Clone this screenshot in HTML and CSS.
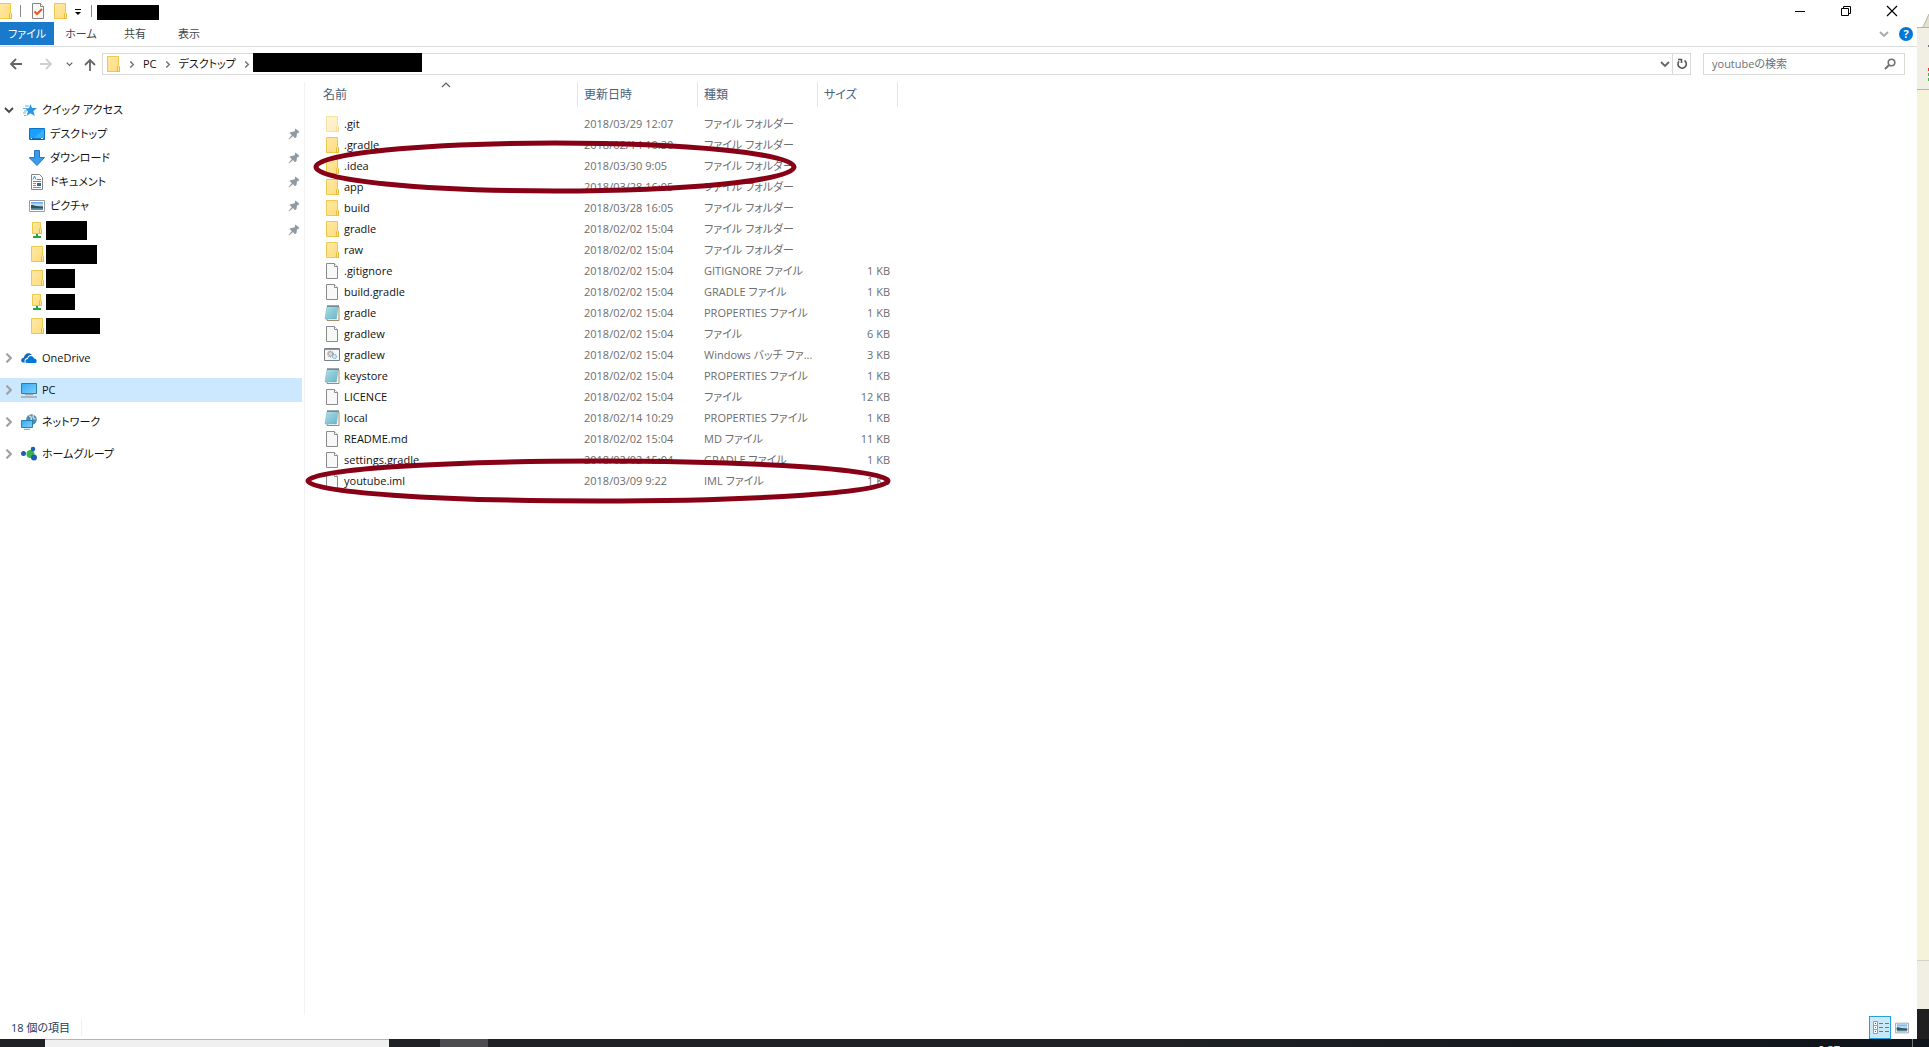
FILE: index.html
```html
<!DOCTYPE html>
<html lang="ja">
<head>
<meta charset="utf-8">
<title>エクスプローラー</title>
<link rel="stylesheet" href="styles.css">
</head>
<body>
<svg class="defs" aria-hidden="true">
  <linearGradient id="gold" x1="0" y1="0" x2="1" y2="1"><stop offset="0" stop-color="#ffe9a6"/><stop offset="1" stop-color="#ffdc7c"/></linearGradient>
  <linearGradient id="screen" x1="0" y1="0" x2="1" y2="1"><stop offset="0" stop-color="#36a9f4"/><stop offset="1" stop-color="#7fd2fb"/></linearGradient>
  <linearGradient id="pad" x1="0" y1="0" x2="1" y2="1"><stop offset="0" stop-color="#b5e3ea"/><stop offset="1" stop-color="#5fb0c6"/></linearGradient>
  <linearGradient id="photo" x1="0" y1="0" x2="0" y2="1"><stop offset="0" stop-color="#5a9ce8"/><stop offset=".4" stop-color="#d6ebfa"/><stop offset=".6" stop-color="#3d6b74"/><stop offset="1" stop-color="#5d93b5"/></linearGradient>
  <symbol id="folder" viewBox="0 0 16 16"><path d="M2.500 .500h11v9.500l1 1v4.500h-12z" fill="url(#gold)" stroke="#efc94c"/><path d="M12.500 15v-4.500l1-1 1 1v5h-2z" fill="#ffe69a" stroke="#e9bd3c"/></symbol>
  <symbol id="netfolder" viewBox="0 0 16 16"><path d="M3.500 .500h8v6l1 1v4h-9z" fill="url(#gold)" stroke="#efc94c"/><path d="M10.500 11v-4l1-1 1 1v4.500h-2z" fill="#ffe69a" stroke="#e9bd3c"/><path d="M7 12h2v2h3v2H4v-2h3z" fill="#27a737"/></symbol>
  <symbol id="file" viewBox="0 0 16 16"><path d="M2.500 .500h8l3 3v12h-11z" fill="#f7f9f9" stroke="#8b8b8b"/><path d="M10.500 .500v3h3" fill="#fff" stroke="#8b8b8b"/></symbol>
  <symbol id="notes" viewBox="0 0 16 16"><path d="M4 3l11-1v13.500H3z" fill="#fff" stroke="#a38d68"/><path d="M3 1.500h11L12.500 14H1z" fill="url(#pad)" stroke="#79b6c4" stroke-width=".6"/><path d="M3.500 5h10M3 8h10M2.500 11h10" stroke="#8bcbd8" stroke-width=".6"/><path d="M3.500 1h11" stroke="#39545c" stroke-width="2" stroke-dasharray="1 1"/></symbol>
  <symbol id="batch" viewBox="0 0 16 16"><path d="M.500 1.500h15v12H.500z" fill="#f5f7f8" stroke="#7b8085"/><path d="M1 2.500h14" stroke="#8d9297"/><circle cx="6.500" cy="7" r="2.500" fill="#ddd" stroke="#8b8b8b" stroke-width="1.500" stroke-dasharray="1 .6"/><circle cx="10.500" cy="9.500" r="2" fill="#d8ecfa" stroke="#84b5d8" stroke-width="1.300" stroke-dasharray="1 .5"/></symbol>
  <symbol id="chev" viewBox="0 0 8 8"><path d="M2 .500L5.500 4 2 7.500" fill="none" stroke="currentColor" stroke-width="1.700"/></symbol>
  <symbol id="chevd" viewBox="0 0 10 8"><path d="M1 2l4 4 4-4" fill="none" stroke="currentColor" stroke-width="1.800"/></symbol>
  <symbol id="pin" viewBox="0 0 12 12"><path d="M7.500 .500l4 3.500-1.500 1-1 .5-.5 3.500-1.500 1.300-2-2.300L1 11.500l-.5-.5L3.800 7 1.500 5 3 4l3.500-.5z" fill="#8d99a3"/></symbol>
  <symbol id="arrow" viewBox="0 0 14 12"><path d="M13 6H2M7 1L2 6l5 5" fill="none" stroke="currentColor" stroke-width="1.800"/></symbol>
  <symbol id="picture" viewBox="0 0 16 16"><path d="M.500 2.500h15v11H.500z" fill="#fff" stroke="#9b9b9b"/><path d="M2 4h12v8H2z" fill="url(#photo)"/><path d="M2 7c4 0 6 2 12 2v1H2z" fill="#2d5552"/></symbol>
</svg>

<div class="screen">
  <main class="window">
    <header class="titlebar">
      <svg class="icon app"><use href="#folder"/></svg>
      <i class="sep"></i>
      <button class="quick" aria-label="プロパティ"><svg class="icon" viewBox="0 0 16 16"><path d="M2.500 .500h8l3 3v12h-11z" fill="#f8f8f8" stroke="#858585"/><path d="M10.500 .500v3h3" fill="#fff" stroke="#858585"/><path d="M4.500 8.500l2.500 2.500 5-5" fill="none" stroke="#e8571c" stroke-width="2"/></svg></button>
      <button class="quick" aria-label="新しいフォルダー"><svg class="icon"><use href="#folder"/></svg></button>
      <button class="quick more" aria-label="カスタマイズ"><svg width="8" height="8" viewBox="0 0 8 8"><path d="M1 .500h6" stroke="#000"/><path d="M1 3h6L4 6z" fill="#000"/></svg></button>
      <i class="sep"></i>
      <span class="redacted title"></span>
      <div class="controls">
        <button aria-label="最小化"><svg width="12" height="12"><path d="M1 6.500h10" stroke="#000"/></svg></button>
        <button aria-label="元に戻す"><svg width="12" height="12"><path d="M1.500 3.500h7v7h-7zM3.500 3.500v-2h7v7h-2" fill="none" stroke="#000"/></svg></button>
        <button aria-label="閉じる"><svg width="12" height="12"><path d="M1 1l10 10M11 1L1 11" stroke="#000" stroke-width="1.200"/></svg></button>
      </div>
    </header>

    <nav class="tabs">
      <button class="tab active">ファイル</button>
      <button class="tab">ホーム</button>
      <button class="tab">共有</button>
      <button class="tab">表示</button>
      <button class="expand" aria-label="リボンの展開"><svg width="10" height="8"><use href="#chevd"/></svg></button>
      <button class="help" aria-label="ヘルプ">?</button>
    </nav>

    <div class="toolbar">
      <div class="history">
        <button aria-label="戻る"><svg width="14" height="12"><use href="#arrow"/></svg></button>
        <button class="off" aria-label="進む"><svg class="flip" width="14" height="12"><use href="#arrow"/></svg></button>
        <button class="recent" aria-label="履歴"><svg width="7" height="6"><use href="#chevd"/></svg></button>
        <button aria-label="上へ"><svg width="12" height="13" viewBox="0 0 12 13"><path d="M6 13V2M1 7l5-5 5 5" fill="none" stroke="currentColor" stroke-width="1.800"/></svg></button>
      </div>
      <div class="address">
        <svg class="icon"><use href="#folder"/></svg>
        <svg class="crumb-sep" width="8" height="7"><use href="#chev"/></svg>
        <a href="#">PC</a>
        <svg class="crumb-sep" width="8" height="7"><use href="#chev"/></svg>
        <a href="#">デスクトップ</a>
        <svg class="crumb-sep" width="8" height="7"><use href="#chev"/></svg>
        <span class="redacted path"></span>
        <button class="drop" aria-label="場所の一覧"><svg width="10" height="8"><use href="#chevd"/></svg></button>
        <button class="refresh" aria-label="更新"><svg width="12" height="12" viewBox="0 0 12 12"><path d="M8.500 2.500A4.200 4.200 0 1 1 3 3.200M2 1.500H5.500V5" fill="none" stroke="currentColor" stroke-width="1.600"/></svg></button>
      </div>
      <div class="search">
        <input type="search" aria-label="検索" placeholder="youtubeの検索">
        <svg width="12" height="12" viewBox="0 0 12 12"><circle cx="7.500" cy="4.500" r="3.300" fill="none" stroke="#707070" stroke-width="1.600"/><path d="M5 7L1 11" stroke="#707070" stroke-width="2"/></svg>
      </div>
    </div>

    <div class="content">
      <nav class="tree">
        <a class="node" href="#"><svg class="toggle open"><use href="#chevd"/></svg><svg class="icon" viewBox="0 0 16 16"><path d="M9.500 2l1.500 4h5l-3.600 3 1.300 5-4.300-2.800L5.500 14l1.500-4.600L4 6.200h4z" fill="#2a95e0"/><path d="M4 4h4M2 6.500h3M3 9h3M2 11h3M3 13.500h2" stroke="#5fb4ec"/></svg>クイック アクセス</a>
        <a class="node child" href="#"><svg class="icon" viewBox="0 0 16 16"><path d="M.500 2.500h15v11H.500z" fill="#18a0fb" stroke="#0a74c4"/><path d="M5 12L15 3v9z" fill="#38aefc"/><path d="M1 13h14" stroke="#0b4f86"/><path d="M2 12.500h1M12 12.500h2" stroke="#fff"/></svg>デスクトップ<svg class="pin"><use href="#pin"/></svg></a>
        <a class="node child" href="#"><svg class="icon" viewBox="0 0 16 16"><path d="M5.500 .500h5v7h5L8 15.500.500 8V7.500h5z" fill="#3b9ae9" stroke="#2379c8"/></svg>ダウンロード<svg class="pin"><use href="#pin"/></svg></a>
        <a class="node child" href="#"><svg class="icon" viewBox="0 0 16 16"><path d="M2.500 .500h8l3 3v12h-11z" fill="#fff" stroke="#858585"/><path d="M4 5.500L5.500 2 7 5.500M8 5.500h4M4 7.500h8" fill="none" stroke="#2a95e0"/><path d="M4 9.500h3M4 11.500h3M4 13.500h8" stroke="#7c8e9c"/><path d="M8 9h4v3H8z" fill="#2f6e92"/></svg>ドキュメント<svg class="pin"><use href="#pin"/></svg></a>
        <a class="node child" href="#"><svg class="icon"><use href="#picture"/></svg>ピクチャ<svg class="pin"><use href="#pin"/></svg></a>
        <a class="node child hidden-name" href="#"><svg class="icon"><use href="#netfolder"/></svg><span class="redacted w41"></span><svg class="pin"><use href="#pin"/></svg></a>
        <a class="node child hidden-name" href="#"><svg class="icon"><use href="#folder"/></svg><span class="redacted w51"></span></a>
        <a class="node child hidden-name" href="#"><svg class="icon"><use href="#folder"/></svg><span class="redacted w29"></span></a>
        <a class="node child hidden-name" href="#"><svg class="icon"><use href="#netfolder"/></svg><span class="redacted w29 low"></span></a>
        <a class="node child hidden-name" href="#"><svg class="icon"><use href="#folder"/></svg><span class="redacted w54 low"></span></a>
        <a class="node root" href="#"><svg class="toggle"><use href="#chev"/></svg><svg class="icon" viewBox="0 0 16 16"><path d="M1.500 12.500C-.5 11.500-.3 8 3 7.500 3.200 3.500 8.500 1.500 11 5 8 4.500 6.500 6 6.200 8 3.500 8 3 11 4 12.500z" fill="#1068bf"/><path d="M6 13C3.500 12.500 4 9 7 9c0-4 5.500-4 6-.5 3.500 0 3.500 4.500.5 4.500z" fill="#0078d7"/></svg>OneDrive</a>
        <a class="node root selected" href="#"><svg class="toggle"><use href="#chev"/></svg><svg class="icon" viewBox="0 0 16 16"><path d="M.500 1.500h15v10H.500z" fill="url(#screen)" stroke="#2d7fa8"/><path d="M4 12.500h8M0 15h16" stroke="#9aa6ad" stroke-width="1.400"/></svg>PC</a>
        <a class="node root" href="#"><svg class="toggle"><use href="#chev"/></svg><svg class="icon" viewBox="0 0 16 16"><circle cx="10.500" cy="5.500" r="5.300" fill="#4f8bb0"/><path d="M8 2c2 0 3 2 2 4M12.500 1c-1 2 0 4 2 4" fill="none" stroke="#c8e0ec" stroke-width="1.500"/><path d="M.500 6.500h11v7H.500z" fill="url(#screen)" stroke="#2d7fa8"/><path d="M3 15.300h6" stroke="#84949c"/></svg>ネットワーク</a>
        <a class="node root" href="#"><svg class="toggle"><use href="#chev"/></svg><svg class="icon" viewBox="0 0 16 16"><path d="M12 2L6 8l6 4z" fill="#2daf3c"/><circle cx="9.500" cy="8" r="4" fill="#36b449"/><circle cx="2.500" cy="7.500" r="2.500" fill="#1b5eb4"/><circle cx="12" cy="3" r="2.300" fill="#1b5eb4"/><circle cx="13" cy="11.500" r="3" fill="#1b5eb4"/></svg>ホームグループ</a>
      </nav>

      <section class="list">
        <table>
          <colgroup><col class="c-name"><col class="c-date"><col class="c-type"><col class="c-size"></colgroup>
          <thead><tr><th>名前<svg class="sort" width="10" height="6"><path d="M1 5l4-4 4 4" fill="none" stroke="#606060" stroke-width="1.200"/></svg></th><th>更新日時</th><th>種類</th><th>サイズ</th></tr></thead>
          <tbody>
            <tr><td><svg class="icon faded"><use href="#folder"/></svg>.git</td><td>2018/03/29 12:07</td><td>ファイル フォルダー</td><td></td></tr>
            <tr><td><svg class="icon"><use href="#folder"/></svg>.gradle</td><td>2018/02/14 10:30</td><td>ファイル フォルダー</td><td></td></tr>
            <tr><td><svg class="icon"><use href="#folder"/></svg>.idea</td><td>2018/03/30 9:05</td><td>ファイル フォルダー</td><td></td></tr>
            <tr><td><svg class="icon"><use href="#folder"/></svg>app</td><td>2018/03/28 16:05</td><td>ファイル フォルダー</td><td></td></tr>
            <tr><td><svg class="icon"><use href="#folder"/></svg>build</td><td>2018/03/28 16:05</td><td>ファイル フォルダー</td><td></td></tr>
            <tr><td><svg class="icon"><use href="#folder"/></svg>gradle</td><td>2018/02/02 15:04</td><td>ファイル フォルダー</td><td></td></tr>
            <tr><td><svg class="icon"><use href="#folder"/></svg>raw</td><td>2018/02/02 15:04</td><td>ファイル フォルダー</td><td></td></tr>
            <tr><td><svg class="icon"><use href="#file"/></svg>.gitignore</td><td>2018/02/02 15:04</td><td>GITIGNORE ファイル</td><td>1 KB</td></tr>
            <tr><td><svg class="icon"><use href="#file"/></svg>build.gradle</td><td>2018/02/02 15:04</td><td>GRADLE ファイル</td><td>1 KB</td></tr>
            <tr><td><svg class="icon"><use href="#notes"/></svg>gradle</td><td>2018/02/02 15:04</td><td>PROPERTIES ファイル</td><td>1 KB</td></tr>
            <tr><td><svg class="icon"><use href="#file"/></svg>gradlew</td><td>2018/02/02 15:04</td><td>ファイル</td><td>6 KB</td></tr>
            <tr><td><svg class="icon"><use href="#batch"/></svg>gradlew</td><td>2018/02/02 15:04</td><td>Windows バッチ ファ...</td><td>3 KB</td></tr>
            <tr><td><svg class="icon"><use href="#notes"/></svg>keystore</td><td>2018/02/02 15:04</td><td>PROPERTIES ファイル</td><td>1 KB</td></tr>
            <tr><td><svg class="icon"><use href="#file"/></svg>LICENCE</td><td>2018/02/02 15:04</td><td>ファイル</td><td>12 KB</td></tr>
            <tr><td><svg class="icon"><use href="#notes"/></svg>local</td><td>2018/02/14 10:29</td><td>PROPERTIES ファイル</td><td>1 KB</td></tr>
            <tr><td><svg class="icon"><use href="#file"/></svg>README.md</td><td>2018/02/02 15:04</td><td>MD ファイル</td><td>11 KB</td></tr>
            <tr><td><svg class="icon"><use href="#file"/></svg>settings.gradle</td><td>2018/02/02 15:04</td><td>GRADLE ファイル</td><td>1 KB</td></tr>
            <tr><td><svg class="icon"><use href="#file"/></svg>youtube.iml</td><td>2018/03/09 9:22</td><td>IML ファイル</td><td>1 KB</td></tr>
          </tbody>
        </table>
        <svg class="marks" width="600" height="440" aria-hidden="true">
          <g fill="none" stroke="#880015" stroke-width="5"><ellipse cx="250" cy="85" rx="239" ry="24"/><ellipse cx="293" cy="399" rx="290" ry="20"/></g>
        </svg>
      </section>
    </div>

    <footer class="status">
      <span class="count">18 個の項目</span>
      <div class="views">
        <button class="on" aria-label="詳細"><svg width="18" height="16"><path d="M2.500 1.500h4v12h-4zM2.500 5.500h4M2.500 9.500h4" fill="#fff" stroke="#9a9a9a"/><path d="M8 3.500h4M14 3.500h4M8 7.500h4M14 7.500h4M8 11.500h4M14 11.500h4" stroke="#6a7880"/><path d="M4 3.500h1" stroke="#444"/><path d="M4 7.500h1" stroke="#28c"/><path d="M4 11.500h1" stroke="#c33"/></svg></button>
        <button class="large" aria-label="大アイコン"><svg width="14" height="14"><use href="#picture"/></svg></button>
      </div>
    </footer>
  </main>

  <aside class="behind">
    <svg class="behind-tab" width="12" height="27"><path d="M6 27L12 14v13z" fill="#e6dfcd"/><path d="M6 27L12 14" stroke="#b9b2a6"/></svg>
    <div class="behind-bar"><i class="tick"></i><i class="red"></i><i></i><i></i></div>
    <div class="behind-page"></div>
    <div class="behind-foot"></div>
    <div class="behind-dark"></div>
  </aside>
</div>

<footer class="taskbar">
  <span class="start"></span><span class="cortana"></span><span class="view"></span><span class="running"></span>
  <time>9:37</time><span class="peek"></span>
</footer>
</body>
</html>
```
FILE: styles.css
```css
* { box-sizing: border-box; }

body {
  margin: 0;
  height: 100vh;
  display: flex;
  flex-direction: column;
  overflow: hidden;
  background: #fff;
  color: #111;
  font: 11px/16px "Open Sans", "Noto Sans CJK JP", sans-serif;
  font-feature-settings: "palt";
}

button {
  margin: 0;
  padding: 0;
  border: 0;
  background: none;
  color: inherit;
  font: inherit;
  font-feature-settings: inherit;
  display: flex;
  align-items: center;
  justify-content: center;
}

a { color: inherit; text-decoration: none; }
svg { display: block; flex: none; }
.defs { position: absolute; width: 0; height: 0; }
.icon { width: 16px; height: 16px; }
.redacted { background: #000; flex: none; }

.screen { flex: 1; min-height: 0; display: flex; }
.window { flex: 1; min-width: 0; display: flex; flex-direction: column; }

/* title bar */
.titlebar { height: 22px; display: flex; align-items: center; }
.app { margin-left: -3px; }
.sep { width: 1px; height: 12px; margin: 0 7px; background: #8a8a8a; }
.quick { width: 16px; margin-left: 2px; }
.quick + .quick { margin-left: 6px; }
.quick.more { width: 8px; margin: 3px 2px 0 6px; }
.title { width: 62px; height: 15px; margin: 3px 0 0 -2px; }
.controls { margin-left: auto; display: flex; padding-right: 2px; }
.controls button { width: 46px; height: 18px; }

/* ribbon tabs */
.tabs { height: 25px; padding-bottom: 1px; display: flex; align-items: stretch; border-bottom: 1px solid #dadbdc; }
.tab { width: 54px; padding-top: 1px; font-size: 11px; color: #444; }
.tab.active { background: #1979ca; color: #fff; }
.expand { margin-left: auto; color: #a8a8a8; width: 20px; }
.help {
  align-self: center;
  width: 14px;
  height: 14px;
  margin: 0 4px 0 5px;
  border-radius: 50%;
  background: #0078d7;
  color: #fff;
  font-weight: 700;
}

/* address row */
.toolbar { padding: 6px 12px 0 8px; display: flex; gap: 12px; }
.history { display: flex; align-items: center; gap: 12px; color: #666; margin-right: -8px; }
.history button { width: 16px; height: 22px; }
.history .off { color: #d0d0d0; margin-left: 2px; }
.history .recent { width: 8px; margin-left: -1px; }
.history button:last-child { margin-left: -3px; }
.flip { transform: scaleX(-1); }
.address { flex: 1; height: 22px; display: flex; align-items: center; border: 1px solid #d9d9d9; padding-left: 2px; }
.crumb-sep { margin: 0 7px; color: #777; }
.path { width: 169px; height: 19px; margin-top: -4px; margin-left: -5px; }
.drop { margin-left: auto; width: 14px; color: #666; }
.refresh { width: 18px; height: 20px; border-left: 1px solid #d9d9d9; color: #555; }
.search { width: 202px; height: 22px; display: flex; align-items: center; border: 1px solid #d9d9d9; padding: 0 8px; }
.search input {
  flex: 1;
  min-width: 0;
  padding: 0;
  border: 0;
  outline: 0;
  background: none;
  font: inherit;
  font-feature-settings: inherit;
}
.search input::placeholder { color: #707070; opacity: 1; }

/* body */
.content { flex: 1; min-height: 0; display: flex; padding-top: 7px; }
.tree { width: 305px; padding: 16px 2px 0 0; border-right: 1px solid #f2f2f2; }
.node { height: 24px; display: flex; align-items: center; gap: 5px; padding-left: 4px; }
.node.child { padding: 0 2px 0 29px; }
.node.root { margin-top: 8px; }
.node.hidden-name { gap: 1px; }
.node.selected { background: #cce8ff; }
.toggle { width: 10px; height: 10px; margin-right: 2px; color: #a0a0a0; }
.toggle.open { color: #444; }
.pin { width: 12px; height: 12px; margin-left: auto; }
.node .redacted { height: 19px; }
.node .redacted.low { height: 16px; }
.w29 { width: 29px; }
.w41 { width: 41px; }
.w51 { width: 51px; }
.w54 { width: 54px; }

/* file table */
.list { flex: 1; min-width: 0; position: relative; }
table { width: 593px; table-layout: fixed; border-collapse: separate; border-spacing: 0; }
.c-name { width: 273px; }
.c-date, .c-type { width: 120px; }
.c-size { width: 80px; }
th {
  position: relative;
  height: 25px;
  padding: 0 6px;
  border-right: 1px solid #e5e5e5;
  text-align: left;
  font-size: 12px;
  font-weight: 400;
  color: #4c607a;
}
th:first-child { padding-left: 18px; }
thead::after { content: ""; display: block; height: 6px; }
.sort { position: absolute; left: 50%; top: 0; }
td { height: 21px; padding: 0 6px; color: #6d6d6d; white-space: nowrap; }
td:first-child { display: flex; align-items: center; gap: 4px; padding-left: 19px; color: #111; }
td:last-child { text-align: right; padding-right: 8px; }
.faded { opacity: .5; }
.marks { position: absolute; left: 0; top: 0; }

/* status bar */
.status { height: 24px; display: flex; align-items: center; justify-content: space-between; padding: 0 4px 0 11px; color: #1e395b; }
.count { padding: 1px 11px 0 0; border-right: 1px solid #f0f0f0; }
.views { display: flex; align-self: flex-end; }
.views button { width: 22px; height: 23px; }
.views .on { background: #cbe8f6; border: 1px solid #26a0da; }

/* window visible behind the right edge */
.behind { width: 12px; display: flex; flex-direction: column; }
.behind-bar { height: 63px; padding: 17px 0 0 11px; background: #f1efe4; border: solid #b9b2a6; border-width: 1px 0; display: flex; flex-direction: column; gap: 2px; }
.behind-bar i { height: 3px; background: #4caf50; }
.behind-bar .tick { height: 2px; background: #777; }
.behind-bar .red { margin-top: 19px; background: #e33; }
.behind-page { flex: 1; background: #f5f3da; border-bottom: 1px solid #d5d2c4; }
.behind-foot { height: 48px; background: #f1efe4; }
.behind-dark { height: 30px; background: #202021; }

/* taskbar */
.taskbar { height: 8px; display: flex; overflow: hidden; background: linear-gradient(90deg, #1f2124 60%, #0f151b 95%); }
.start { width: 45px; }
.cortana { width: 344px; background: #f0f0f0; border-top: 1px solid #b4b4b4; }
.view { width: 51px; }
.running { width: 48px; background: #4d4d4f; }
.taskbar time { margin: 3px 72px 0 auto; color: #fff; }
.peek { width: 1px; margin-right: 16px; background: #777; }
```
